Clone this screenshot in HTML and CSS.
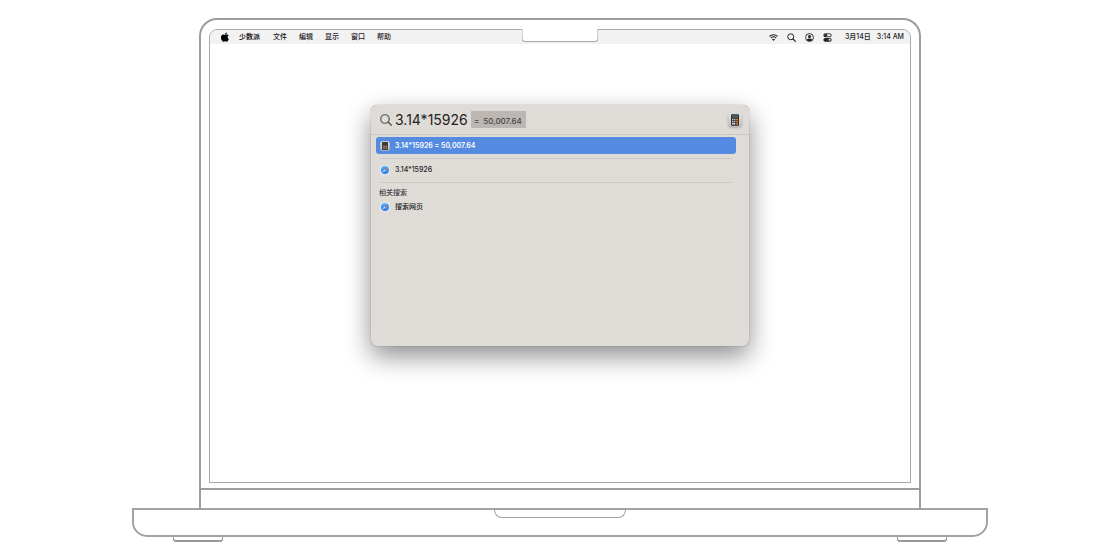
FILE: index.html
```html
<!DOCTYPE html>
<html lang="zh-CN">
<head>
<meta charset="utf-8">
<title>聚焦搜索</title>
<link rel="stylesheet" href="styles.css">
</head>
<body>
<svg class="defs" aria-hidden="true">
  <defs>
    <linearGradient id="blue" x1="0" y1="0" x2="0" y2="1"><stop offset="0" stop-color="#55b9f7"/><stop offset="1" stop-color="#2d78e0"/></linearGradient>
    <linearGradient id="tile" x1="0" y1="0" x2="0" y2="1"><stop offset="0" stop-color="#e2e4e4"/><stop offset="1" stop-color="#bdbcba"/></linearGradient>
    <symbol id="safari" viewBox="0 0 20 20">
      <rect x="0.5" y="0.5" width="19" height="19" rx="5" fill="#e9ecef"/>
      <circle cx="10" cy="10" r="8.2" fill="url(#blue)"/>
      <path d="M16 4 8.900 8.900l2.200 2.200z" fill="#f0504a"/>
      <path d="M4.500 15.500l4.400-6.600 2.200 2.200z" fill="#dfeaf8"/>
    </symbol>
    <symbol id="calculator" viewBox="0 0 28 28">
      <rect x="0.5" y="0.5" width="27" height="27" rx="6" fill="url(#tile)"/>
      <rect x="6" y="2.500" width="16" height="23" rx="1.500" fill="#303232"/>
      <rect x="8" y="4.500" width="12" height="5" fill="#565b5b"/>
      <g fill="#d0cfcc"><rect x="8" y="11.500" width="2.600" height="2.600"/><rect x="12" y="11.500" width="2.600" height="2.600"/><rect x="8" y="15.500" width="2.600" height="2.600"/><rect x="12" y="15.500" width="2.600" height="2.600"/><rect x="8" y="19.500" width="6.600" height="3.500"/></g>
      <g fill="#e88a2a"><rect x="16.500" y="11.500" width="3.500" height="2.600"/><rect x="16.500" y="15.500" width="3.500" height="2.600"/><rect x="16.500" y="19.500" width="3.500" height="3.500"/></g>
    </symbol>
    <symbol id="calculator-small" viewBox="0 0 20 20">
      <rect x="0.5" y="0.5" width="19" height="19" rx="4.500" fill="url(#tile)"/>
      <rect x="4" y="2" width="12" height="16" rx="1" fill="#3c3b39"/>
      <rect x="6" y="9" width="5" height="7" fill="#77736f"/>
      <rect x="12" y="9" width="2.500" height="7" fill="#a5713c"/>
    </symbol>
    <symbol id="search" viewBox="0 0 24 24">
      <circle cx="10" cy="10" r="8" fill="none" stroke="currentColor" stroke-width="2.600"/>
      <path d="M16 16l6.500 6.500" stroke="currentColor" stroke-width="3" stroke-linecap="round"/>
    </symbol>
  </defs>
</svg>
<main class="laptop">
  <div class="lid">
    <div class="bezel">
      <div class="screen">
        <header class="menubar">
          <nav class="menus">
            <button class="menu apple" aria-label="Apple">
              <svg viewBox="0 0 24 24"><path fill="currentColor" d="M16.600 1c.2 1.500-.4 2.900-1.300 3.900-.9 1.100-2.200 1.800-3.500 1.700-.2-1.400.5-2.800 1.300-3.700C14 1.800 15.500 1.100 16.600 1zM20.800 8.400c-1.600 1-2.500 2.400-2.500 4.100 0 2 1.200 3.700 3 4.400-.4 1.300-1 2.400-1.800 3.500-1 1.500-2.100 2.900-3.700 2.900-1.500 0-2-.9-3.700-.9s-2.300.9-3.700.9c-1.600 0-2.800-1.600-3.800-3C2 16.600 1.400 11.600 3.300 8.900c1.100-1.700 2.800-2.700 4.600-2.700s3 1 4.300 1c1.300 0 2.400-1.100 4.500-1.100 1.600 0 3.200.9 4.100 2.300z"/></svg>
            </button>
            <button class="menu app-name">少数派</button>
            <button class="menu">文件</button>
            <button class="menu">编辑</button>
            <button class="menu">显示</button>
            <button class="menu">窗口</button>
            <button class="menu">帮助</button>
          </nav>
          <div class="status">
            <button class="menu" aria-label="Wi-Fi"><svg class="status-icon" viewBox="0 0 24 24"><g fill="none" stroke="currentColor" stroke-width="2.800"><path d="M1 9c6.200-6 15.800-6 22 0M5 13.500c4.200-4 9.800-4 14 0"/></g><path d="M8 16.800c2.300-2.100 5.700-2.100 8 0L12 21z" fill="currentColor"/></svg></button>
            <button class="menu" aria-label="搜索"><svg class="status-icon"><use href="#search"/></svg></button>
            <button class="menu" aria-label="用户"><svg class="status-icon" viewBox="0 0 24 24"><circle cx="12" cy="12" r="10.500" fill="none" stroke="currentColor" stroke-width="2.400"/><circle cx="12" cy="9.500" r="4" fill="currentColor"/><path d="M4.800 18.800c1.500-5.500 12.900-5.500 14.400 0-4 4.400-10.400 4.400-14.400 0z" fill="currentColor"/></svg></button>
            <button class="menu" aria-label="控制中心"><svg class="status-icon" viewBox="0 0 24 24"><rect x="2" y="2" width="20" height="8" rx="4" fill="none" stroke="currentColor" stroke-width="2.400"/><circle cx="7" cy="6" r="4" fill="currentColor"/><rect x="1" y="13" width="22" height="10" rx="5" fill="currentColor"/><circle cx="17.500" cy="18" r="2.600" fill="#f2f2f2"/></svg></button>
            <time class="clock"><span>3月14日</span><span>3:14 AM</span></time>
          </div>
        </header>
        <div class="notch"></div>
        <section class="spotlight" aria-label="聚焦搜索">
          <div class="query">
            <svg class="query-icon" viewBox="0 0 24 24"><circle cx="10" cy="10" r="8.500" fill="none" stroke="currentColor" stroke-width="2.400"/><path d="M16.200 16.200l6.300 6.300" stroke="currentColor" stroke-width="2.800" stroke-linecap="round"/></svg>
            <input class="query-input" type="text" value="3.14*15926" aria-label="搜索">
            <output class="answer"><span>=</span><span>50,007.64</span></output>
            <svg class="query-app"><use href="#calculator"/></svg>
          </div>
          <div class="results">
            <button class="result selected"><svg class="result-icon"><use href="#calculator-small"/></svg>3.14*15926 = 50,007.64</button>
            <hr class="rule">
            <button class="result"><svg class="result-icon"><use href="#safari"/></svg>3.14*15926</button>
            <hr class="rule">
            <h2 class="group">相关搜索</h2>
            <button class="result"><svg class="result-icon"><use href="#safari"/></svg>搜索网页</button>
          </div>
        </section>
      </div>
    </div>
    <div class="hinge"></div>
  </div>
  <div class="base"><div class="lip"></div></div>
  <div class="feet"><div class="foot"></div><div class="foot"></div></div>
</main>
</body>
</html>
```
FILE: styles.css
```css
* { box-sizing: border-box; }
body {
  margin: 0;
  background: #fff;
  color: #222;
  font-family: Inter, "Noto Sans CJK SC", sans-serif;
  font-size: 7px;
  font-feature-settings: "calt" 0;
  line-height: 10px;
}
button {
  border: 0;
  padding: 0;
  background: none;
  color: inherit;
  font: inherit;
  font-feature-settings: inherit;
}
svg { display: block; flex: none; }
.defs { position: absolute; width: 0; height: 0; }

.laptop { padding: 18px 132px; }
.lid {
  margin: 0 67px;
  border: 2px solid #9c9c9c;
  border-bottom: 0;
  border-radius: 18px 18px 0 0;
}
.bezel {
  padding: 9px 8px 5px;
  border-bottom: 2px solid #9c9c9c;
}
.screen {
  position: relative;
  min-height: 454px;
  border: 1px solid #a8a8a8;
  border-radius: 8px 8px 0 0;
}
.hinge { height: 18px; }
.base {
  height: 29px;
  border: 2px solid #a2a2a2;
  border-radius: 0 0 15px 15px;
}
.lip {
  width: 132px;
  height: 8px;
  margin: 0 auto;
  border: 1px solid #a0a0a0;
  border-top: 0;
  border-radius: 0 0 9px 9px;
}
.feet {
  display: flex;
  justify-content: space-between;
  padding: 0 41px;
}
.foot {
  width: 50px;
  height: 5px;
  border: 1px solid #999;
  border-top: 0;
  border-bottom-width: 2px;
  border-radius: 0 0 3px 3px;
}

.menubar {
  display: flex;
  justify-content: space-between;
  height: 14px;
  padding: 0 6px 0 10px;
  border-radius: 7px 7px 0 0;
  background: #f2f2f2;
  font-weight: 500;
}
.menus, .status { display: flex; align-items: center; }
.menus { gap: 12px; }
.status { gap: 9px; }
.apple { margin-right: -3px; color: #000; }
.apple svg { width: 10px; height: 10px; }
.app-name { margin-right: 1px; font-weight: 700; }
.status-icon { width: 9px; height: 9px; }
.clock { display: flex; gap: 6px; margin-left: 4px; }
.notch {
  position: absolute;
  top: -1px;
  left: 50%;
  width: 77px;
  height: 13px;
  transform: translateX(-50%);
  border: 1px solid #a8a8a8;
  border-top: 0;
  border-radius: 0 0 4px 4px;
  background: #fff;
}

.spotlight {
  width: 54%;
  min-height: 241px;
  margin: 61px auto 0;
  border-radius: 6px;
  background: #dfdbd7;
  box-shadow: 0 0 1px rgba(0, 0, 0, .5), 0 10px 26px rgba(0, 0, 0, .45);
}
.query {
  display: flex;
  align-items: center;
  height: 30px;
  padding: 0 7px 0 9px;
  border-bottom: 1px solid #cbc7c4;
}
.query-icon { width: 12px; height: 12px; margin-right: 3px; color: #555; }
.query-input {
  width: 76px;
  border: 0;
  padding: 0;
  outline: 0;
  background: none;
  color: #222;
  font: 14px/18px Inter, sans-serif;
  font-feature-settings: inherit;
}
.answer {
  display: flex;
  gap: 4px;
  padding: 5px 4px 2px 3px;
  background: #bcb7b3;
  color: #444;
  font-size: 8px;
  font-weight: 500;
}
.query-app { width: 14px; height: 14px; margin-left: auto; filter: drop-shadow(0 1px 1px rgba(0, 0, 0, .25)); }
.results { padding: 2px 13px 0 5px; }
.result {
  display: flex;
  align-items: center;
  gap: 5px;
  width: 100%;
  height: 17px;
  padding: 0 4px;
  border-radius: 3px;
  font-weight: 500;
  text-align: left;
}
.selected { background: #548be0; color: #fff; font-weight: 600; }
.result-icon { width: 10px; height: 10px; }
.rule {
  height: 1px;
  margin: 4px 4px 2px;
  border: 0;
  background: #cdc9c5;
}
.group {
  margin: 0 3px;
  padding-top: 3px;
  color: #444;
  font-size: 7px;
  font-weight: 500;
}
```
